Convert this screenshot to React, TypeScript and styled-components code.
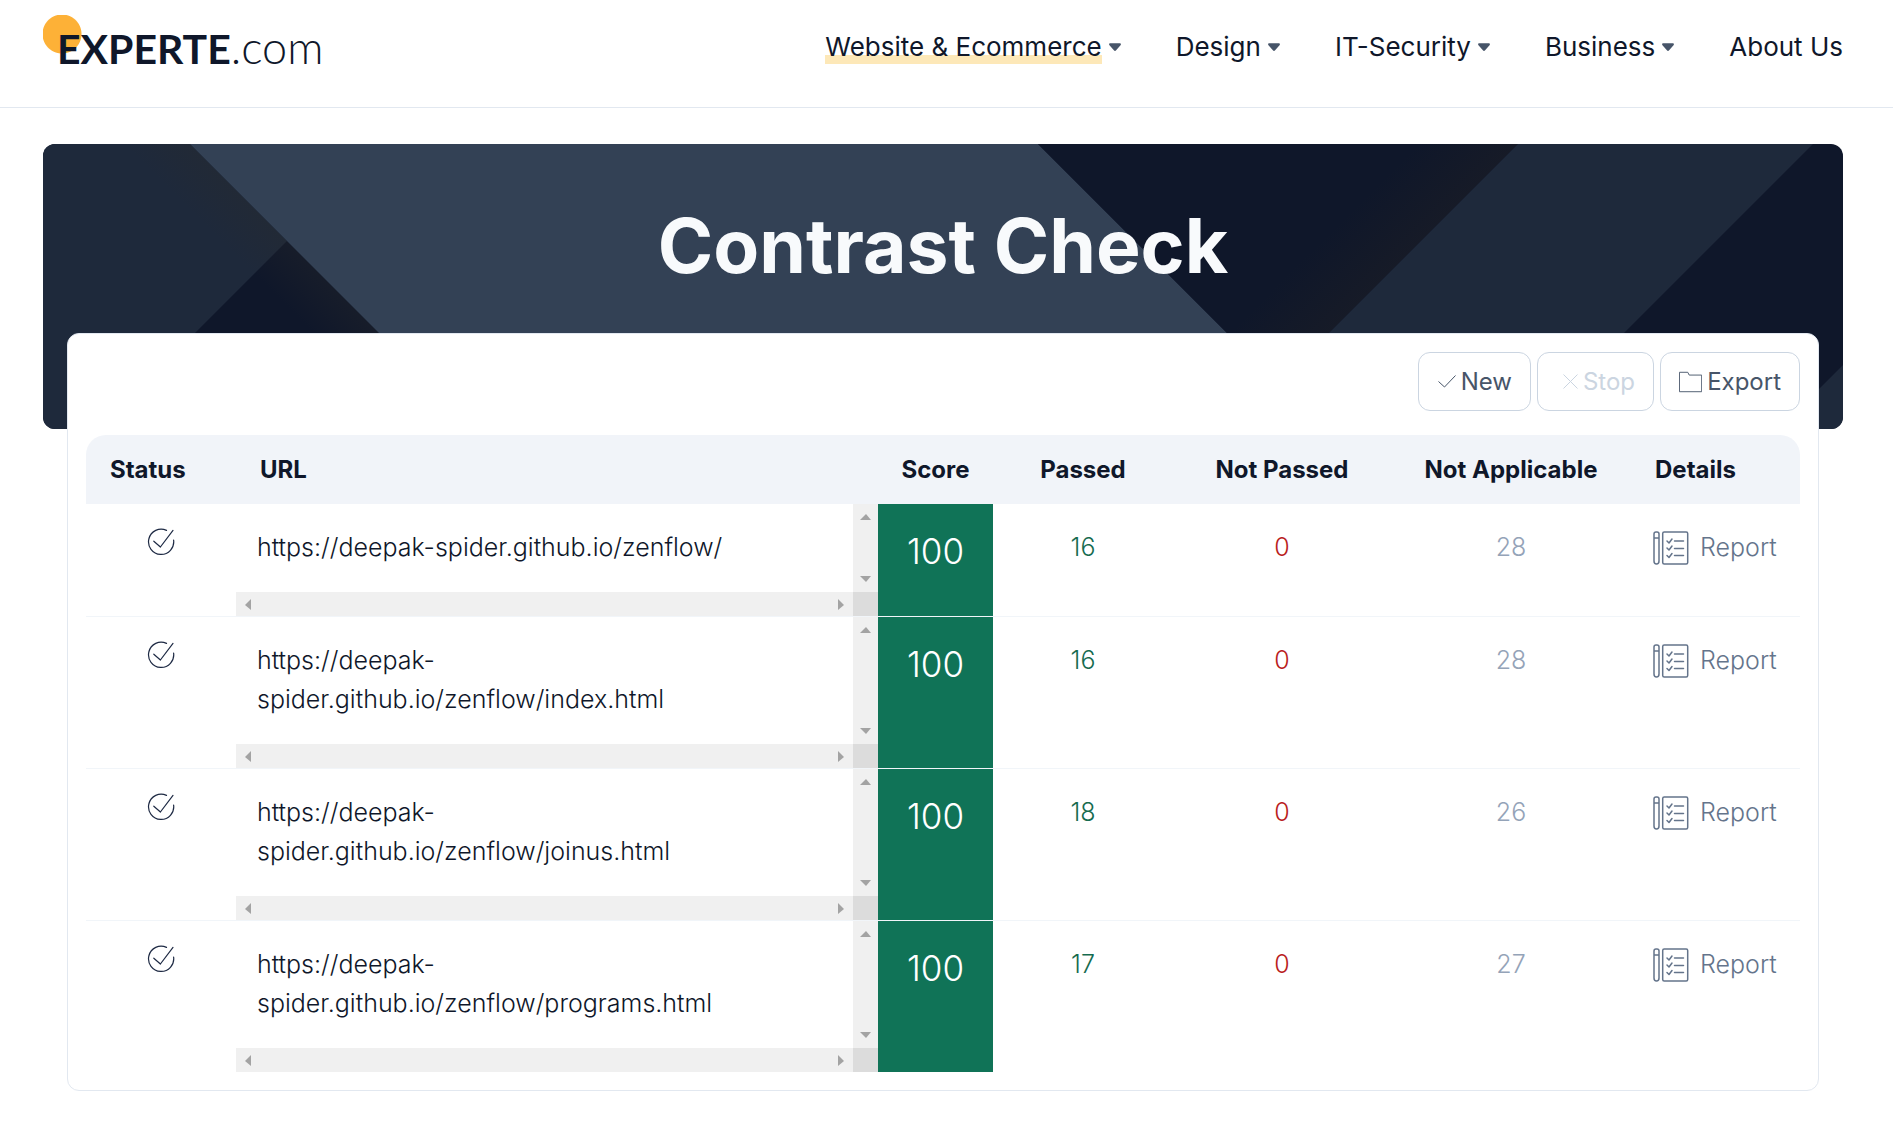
import React from "react";
import styled, { createGlobalStyle } from "styled-components";

const GlobalStyle = createGlobalStyle`
  *, *::before, *::after { box-sizing: border-box; }
  body {
    margin: 0;
    background: #fff;
    color: #0f172a;
    font-family: Inter, "Open Sans", "Liberation Sans", sans-serif;
    font-size: 25px;
    line-height: 39px;
  }
`;

const Header = styled.header`
  display: flex;
  justify-content: space-between;
  padding: 15px 50px 0 43px;
  height: 108px;
  border-bottom: 1px solid #e2e8f0;
`;

const Logo = styled.a`
  display: flex;
  align-items: baseline;
  padding-left: 14px;
  height: 64px;
  line-height: 64px;
  font-family: Lato, Inter, sans-serif;
  font-size: 41px;
  color: #0f172a;
  text-decoration: none;
  background: radial-gradient(circle at 19px 19px, #fdb137 19px, transparent 20px) no-repeat;
`;

const LogoName = styled.span`
  font-weight: 700;
`;

const LogoDomain = styled.span`
  font-size: 45px;
  font-weight: 300;
`;

const Nav = styled.nav`
  display: flex;
  gap: 55px;
  height: 64px;
  align-items: center;
`;

const NavLink = styled.a`
  display: flex;
  align-items: center;
  gap: 7px;
  font-size: 26px;
  line-height: 34px;
  color: #0f172a;
  text-decoration: none;
`;

const NavLabel = styled.span<{ $active?: boolean }>`
  background: ${(p) => (p.$active ? "linear-gradient(#fde8b8, #fde8b8) 0 100% / 100% 9px no-repeat" : "none")};
`;

const Main = styled.main`
  padding: 36px 50px 38px 43px;
`;

const Hero = styled.section`
  display: grid;
  height: 285px;
  border-radius: 12px;
  overflow: hidden;
  background: #0f172a;
`;

const HeroArt = styled.svg`
  grid-area: 1 / 1;
  width: 100%;
  height: 285px;
`;

const Title = styled.h1`
  grid-area: 1 / 1;
  z-index: 1;
  margin: 52px 0 0;
  font-size: 75px;
  line-height: 100px;
  font-weight: 700;
  text-align: center;
  color: #f8fafc;
`;

const Card = styled.section`
  position: relative;
  margin: -96px 24px 0;
  padding: 18px;
  border: 1px solid #e2e8f0;
  border-radius: 12px;
  background: #fff;
`;

const Toolbar = styled.div`
  display: flex;
  justify-content: flex-end;
  gap: 6px;
  margin-bottom: 24px;
`;

const ToolButton = styled.button<{ $width: number }>`
  display: flex;
  align-items: center;
  justify-content: flex-end;
  gap: 5px;
  width: ${(p) => p.$width}px;
  height: 59px;
  padding: 0 18px;
  border: 1px solid #cbd5e1;
  border-radius: 12px;
  background: #fff;
  color: #475569;
  font: inherit;
  font-size: 24px;
  &:disabled { color: #cbd5e1; }
`;

const Table = styled.table`
  width: 100%;
  table-layout: fixed;
  border-collapse: separate;
  border-spacing: 0;
`;

const Col = styled.col<{ $width?: number }>`
  width: ${(p) => (p.$width ? `${p.$width}px` : "auto")};
`;

const Th = styled.th<{ $center?: boolean }>`
  height: 69px;
  padding: 0 ${(p) => (p.$center ? 0 : 24)}px;
  background: #f1f4f9;
  font-size: 24px;
  font-weight: 700;
  text-align: ${(p) => (p.$center ? "center" : "left")};
  white-space: nowrap;
  &:first-child { border-top-left-radius: 20px; }
  &:last-child { border-top-right-radius: 20px; }
`;

const Row = styled.tr`
  &:not(:last-child) > td { border-bottom: 1px solid #f1f5f9; }
`;

const Cell = styled.td<{ $color?: string }>`
  padding: 24px 0;
  vertical-align: top;
  text-align: center;
  font-weight: 300;
  color: ${(p) => p.$color ?? "#0f172a"};
`;

const StatusCell = styled(Cell)`
  & > svg { display: block; margin: 0 auto; }
`;

const UrlCell = styled.td`
  padding: 0;
  vertical-align: top;
`;

const ScoreCell = styled(Cell)`
  padding: 28px 0;
  background: #107357;
  color: #fff;
  font-size: 35px;
`;

const DetailsCell = styled(Cell)`
  padding: 24px 0 24px 22px;
`;

const ScrollPane = styled.div`
  display: grid;
  grid-template-columns: 1fr 25px;
  grid-template-rows: auto 24px;
`;

const Url = styled.div`
  padding: 24px 21px 25px;
  font-weight: 300;
`;

const Track = styled.div<{ $vertical?: boolean }>`
  display: flex;
  flex-direction: ${(p) => (p.$vertical ? "column" : "row")};
  align-items: center;
  justify-content: space-between;
  padding: ${(p) => (p.$vertical ? "10px 0" : "0 9px")};
  background: #f0f0f0;
`;

const Corner = styled.div`
  background: #dcdcdc;
`;

const ReportLink = styled.a`
  display: flex;
  align-items: center;
  gap: 11px;
  color: #64748b;
  text-decoration: none;
`;

const Caret = () => (
  <svg width="12" height="9" viewBox="0 0 13 9" aria-hidden="true">
    <path d="M1.6 0h9.8c1.3 0 2 1 1.1 2L7.7 7.6c-.7.8-1.7.8-2.4 0L.5 2C-.4 1 .3 0 1.6 0z" fill="#475569" />
  </svg>
);

const arrows = {
  up: "M6 0 11 6H0z",
  down: "M0 0H11L6 6z",
  left: "M6 0V11L0 6z",
  right: "M0 0V11L6 6z",
};

const Arrow = ({ dir }: { dir: keyof typeof arrows }) => {
  const vertical = dir === "up" || dir === "down";
  return (
    <svg width={vertical ? 11 : 6} height={vertical ? 6 : 11} aria-hidden="true">
      <path d={arrows[dir]} fill="#a3a3a3" />
    </svg>
  );
};

const CheckIcon = () => (
  <svg width="18" height="13" viewBox="0 0 18 13" fill="none" stroke="currentColor" aria-hidden="true">
    <path d="M.5 6.5 6.5 12 17.5.5" />
  </svg>
);

const CrossIcon = () => (
  <svg width="15" height="15" viewBox="0 0 15 15" fill="none" stroke="currentColor" aria-hidden="true">
    <path d="M.5.5l14 14M14.5.5l-14 14" />
  </svg>
);

const FolderIcon = () => (
  <svg width="25" height="22" viewBox="0 0 25 22" fill="none" stroke="currentColor" aria-hidden="true">
    <path d="M.5.5h9l1.5 3h13.5v18H.5z" />
  </svg>
);

const DoneIcon = () => (
  <svg width="28" height="28" viewBox="0 0 28 28" fill="none" stroke="#1e2a44" strokeWidth="1.2" strokeLinecap="round" strokeLinejoin="round" role="img" aria-label="Done">
    <path d="M19.5 2.4A12.6 12.6 0 1 0 26.6 12" />
    <path d="M6.8 13.2 13.4 19 26 2.4" />
  </svg>
);

const ReportIcon = () => (
  <svg width="36" height="34" viewBox="0 0 36 34" fill="none" stroke="currentColor" strokeWidth="1.5" strokeLinecap="round" strokeLinejoin="round" aria-hidden="true">
    <path d="M1 3q0-2 2-2h1q2 0 2 2v27q0 3-2.5 3T1 30zM1 7h5" />
    <rect x="9.7" y="1" width="25" height="32" rx="1.5" />
    <path d="M14 10l2 2 3-4M21.500 10h9M14 17l2 2 3-4M21.500 17.500h9M14 24.500l2 2 3-4M21.500 24.500h9" />
  </svg>
);

const Background = () => (
  <HeroArt viewBox="0 0 1800 285" preserveAspectRatio="xMidYMid slice" aria-hidden="true">
    <defs>
      <linearGradient id="shadeLeft" gradientUnits="userSpaceOnUse" x1="194" y1="94" x2="241" y2="94" gradientTransform="rotate(-45 241 94)">
        <stop offset="0" stopColor="#2a2a2a" stopOpacity="0" />
        <stop offset="1" stopColor="#2a2a2a" stopOpacity=".3" />
      </linearGradient>
      <linearGradient id="shadeRight" gradientUnits="userSpaceOnUse" x1="1310" y1="94" x2="1381" y2="94" gradientTransform="rotate(45 1381 94)">
        <stop offset="0" stopColor="#1f1f24" stopOpacity="0" />
        <stop offset="1" stopColor="#1f1f24" stopOpacity=".45" />
      </linearGradient>
    </defs>
    <path d="M0 0H147L432 285H0z" fill="#1e293b" />
    <path d="M244 97 56 285H432z" fill="#0f172a" />
    <path d="M0 0H147L432 285H0z" fill="url(#shadeLeft)" />
    <path d="M147 0H995L1280 285H432z" fill="#334155" />
    <path d="M995 0H1475L1235 240z" fill="#0f172a" />
    <path d="M995 0H1475L1235 240z" fill="url(#shadeRight)" />
    <path d="M1475 0H1770L1485 285H1190z" fill="#1e293b" />
    <path d="M1800 221V285H1736z" fill="#1e293b" />
  </HeroArt>
);

const menu = [
  { label: "Website & Ecommerce", active: true, caret: true },
  { label: "Design", caret: true },
  { label: "IT-Security", caret: true },
  { label: "Business", caret: true },
  { label: "About Us" },
];

const results = [
  { url: "https://deepak-spider.github.io/zenflow/", passed: 16, failed: 0, skipped: 28 },
  { url: "https://deepak-spider.github.io/zenflow/index.html", passed: 16, failed: 0, skipped: 28 },
  { url: "https://deepak-spider.github.io/zenflow/joinus.html", passed: 18, failed: 0, skipped: 26 },
  { url: "https://deepak-spider.github.io/zenflow/programs.html", passed: 17, failed: 0, skipped: 27 },
];

export default function App() {
  return (
    <>
      <GlobalStyle />
      <Header>
        <Logo href="#">
          <LogoName>EXPERTE</LogoName>
          <LogoDomain>.com</LogoDomain>
        </Logo>
        <Nav>
          {menu.map((item) => (
            <NavLink key={item.label} href="#">
              <NavLabel $active={item.active}>{item.label}</NavLabel>
              {item.caret && <Caret />}
            </NavLink>
          ))}
        </Nav>
      </Header>
      <Main>
        <Hero>
          <Background />
          <Title>Contrast Check</Title>
        </Hero>
        <Card>
          <Toolbar>
            <ToolButton $width={113}><CheckIcon />New</ToolButton>
            <ToolButton $width={117} disabled><CrossIcon />Stop</ToolButton>
            <ToolButton $width={140}><FolderIcon />Export</ToolButton>
          </Toolbar>
          <Table>
            <colgroup>
              <Col $width={150} />
              <Col />
              <Col $width={115} />
              <Col $width={180} />
              <Col $width={218} />
              <Col $width={240} />
              <Col $width={169} />
            </colgroup>
            <thead>
              <tr>
                <Th>Status</Th>
                <Th>URL</Th>
                <Th $center>Score</Th>
                <Th $center>Passed</Th>
                <Th $center>Not Passed</Th>
                <Th $center>Not Applicable</Th>
                <Th>Details</Th>
              </tr>
            </thead>
            <tbody>
              {results.map((r) => (
                <Row key={r.url}>
                  <StatusCell><DoneIcon /></StatusCell>
                  <UrlCell>
                    <ScrollPane>
                      <Url>{r.url}</Url>
                      <Track $vertical><Arrow dir="up" /><Arrow dir="down" /></Track>
                      <Track><Arrow dir="left" /><Arrow dir="right" /></Track>
                      <Corner />
                    </ScrollPane>
                  </UrlCell>
                  <ScoreCell>100</ScoreCell>
                  <Cell $color="#166b4f">{r.passed}</Cell>
                  <Cell $color="#b91c1c">{r.failed}</Cell>
                  <Cell $color="#94a3b8">{r.skipped}</Cell>
                  <DetailsCell>
                    <ReportLink href="#"><ReportIcon />Report</ReportLink>
                  </DetailsCell>
                </Row>
              ))}
            </tbody>
          </Table>
        </Card>
      </Main>
    </>
  );
}
